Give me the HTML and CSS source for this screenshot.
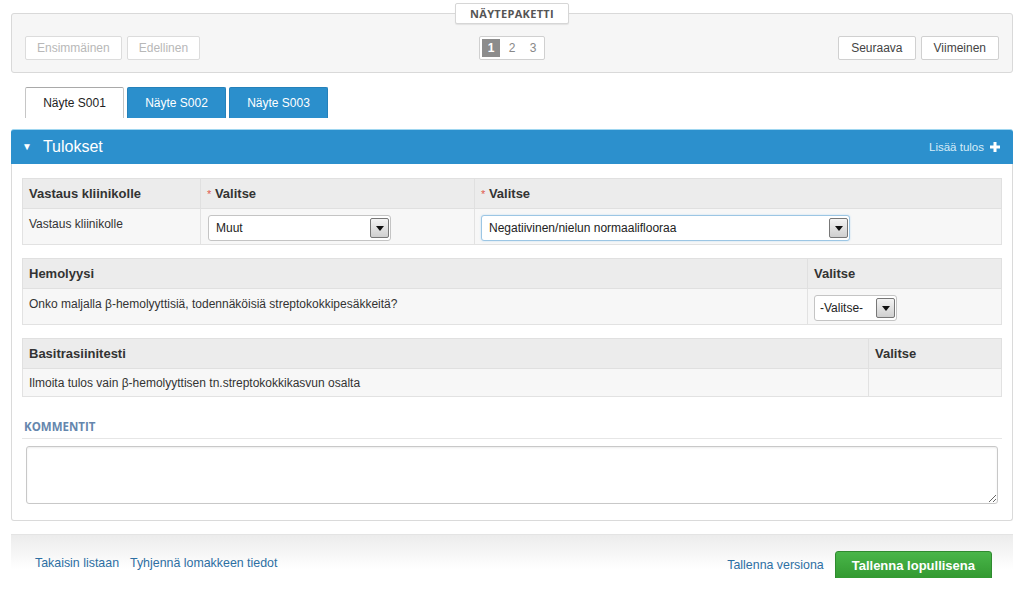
FILE: index.html
```html
<!DOCTYPE html>
<html lang="fi">
<head>
<meta charset="utf-8">
<title>Näytepaketti</title>
<link rel="stylesheet" href="styles.css">
</head>
<body>
<div class="page">
  <fieldset class="pager">
    <legend class="pager-legend">NÄYTEPAKETTI</legend>
    <div class="pager-row">
      <div class="btn-group">
        <span class="btn btn-disabled">Ensimmäinen</span>
        <span class="btn btn-disabled">Edellinen</span>
      </div>
      <div class="pages">
        <span class="page-num page-active">1</span>
        <span class="page-num">2</span>
        <span class="page-num">3</span>
      </div>
      <div class="btn-group btn-group-right">
        <span class="btn">Seuraava</span>
        <span class="btn">Viimeinen</span>
      </div>
    </div>
  </fieldset>

  <div class="tabs">
    <span class="tab tab-active">Näyte S001</span>
    <span class="tab">Näyte S002</span>
    <span class="tab">Näyte S003</span>
  </div>

  <div class="panel">
    <div class="panel-head">
      <span class="panel-title"><span class="caret">&#9660;</span>Tulokset</span>
      <span class="add-link">Lisää tulos <svg class="plus" width="10" height="10" viewBox="0 0 10 10"><path d="M3.5 0h3v3.5H10v3H6.5V10h-3V6.5H0v-3h3.5z" fill="#fff"/></svg></span>
    </div>
    <div class="panel-body">
      <table class="grid grid-1">
        <colgroup><col class="c1a"><col class="c1b"><col></colgroup>
        <tr class="head">
          <th>Vastaus kliinikolle</th>
          <th><span class="req">*</span> Valitse</th>
          <th><span class="req">*</span> Valitse</th>
        </tr>
        <tr class="row row-tall">
          <td class="top">Vastaus kliinikolle</td>
          <td><div class="select sel-muut"><span class="sel-text">Muut</span><span class="sel-arrow"></span></div></td>
          <td><div class="select sel-neg sel-focus"><span class="sel-text">Negatiivinen/nielun normaaliflooraa</span><span class="sel-arrow"></span></div></td>
        </tr>
      </table>

      <table class="grid grid-2">
        <colgroup><col><col class="c2b"></colgroup>
        <tr class="head">
          <th>Hemolyysi</th>
          <th>Valitse</th>
        </tr>
        <tr class="row row-tall">
          <td class="top">Onko maljalla β-hemolyyttisiä, todennäköisiä streptokokkipesäkkeitä?</td>
          <td><div class="select sel-small"><span class="sel-text">-Valitse-</span><span class="sel-arrow"></span></div></td>
        </tr>
      </table>

      <table class="grid grid-3">
        <colgroup><col><col class="c3b"></colgroup>
        <tr class="head">
          <th>Basitrasiinitesti</th>
          <th>Valitse</th>
        </tr>
        <tr class="row">
          <td>Ilmoita tulos vain β-hemolyyttisen tn.streptokokkikasvun osalta</td>
          <td></td>
        </tr>
      </table>

      <div class="comments-label">KOMMENTIT</div>
      <textarea class="comments"></textarea>
    </div>
  </div>

  <div class="footer">
    <div class="footer-left">
      <span class="link">Takaisin listaan</span>
      <span class="link">Tyhjennä lomakkeen tiedot</span>
    </div>
    <div class="footer-right">
      <span class="link">Tallenna versiona</span>
      <span class="btn-save">Tallenna lopullisena</span>
    </div>
  </div>
</div>
</body>
</html>
```

FILE: styles.css
```css
* { box-sizing: border-box; }

html, body {
  margin: 0;
  padding: 0;
  background: #fff;
}

body {
  font-family: "Liberation Sans", Arial, sans-serif;
  font-size: 12px;
  color: #333;
}

.page {
  width: 1002px;
  margin-left: 11px;
}

/* ---------- pager ---------- */
.pager {
  margin: 3px 0 0 0;
  padding: 12px 13px 12px 13px;
  border: 1px solid #d9d9d9;
  border-radius: 3px;
  background: #f6f6f6;
  min-width: 0;
}

.pager-legend {
  margin: 0 auto;
  padding: 0 14px;
  height: 21px;
  line-height: 19px;
  border: 1px solid #d6d6d6;
  border-radius: 2px;
  background: #fff;
  box-shadow: 0 1px 1px rgba(0,0,0,0.08);
  font-family: "Open Sans", "Liberation Sans", sans-serif;
  font-weight: 700;
  font-size: 11px;
  color: #555;
  letter-spacing: 0.3px;
}

.pager-row {
  display: grid;
  grid-template-columns: 1fr auto 1fr;
  align-items: center;
}

.btn-group {
  display: flex;
  gap: 5px;
}

.btn-group-right {
  justify-content: flex-end;
}

.btn {
  display: inline-block;
  height: 24px;
  line-height: 22px;
  padding: 0 12px;
  border: 1px solid #d0d0d0;
  border-radius: 2px;
  background: #fff;
  color: #444;
  font-size: 12px;
}

.btn-disabled {
  color: #b8b8b8;
  border-color: #dcdcdc;
  padding: 0 11px;
}

.pages {
  display: flex;
  height: 24px;
  padding: 2px;
  border: 1px solid #d0d0d0;
  border-radius: 2px;
  background: #fff;
  gap: 3px;
}

.page-num {
  width: 18px;
  line-height: 18px;
  text-align: center;
  color: #888;
  font-size: 12px;
}

.page-active {
  background: #8c8c8c;
  color: #fff;
  font-weight: 700;
}

/* ---------- tabs ---------- */
.tabs {
  display: flex;
  gap: 3px;
  margin: 14px 0 0 14px;
  height: 31px;
}

.tab {
  width: 99px;
  height: 31px;
  line-height: 30px;
  text-align: center;
  background: #2b8fcc;
  color: #fff;
  font-size: 12px;
  border: 1px solid #2581ba;
  border-bottom: none;
  border-radius: 2px 2px 0 0;
}

.tab-active {
  background: #fff;
  color: #222;
  border: 1px solid #c6c6c6;
  border-top: 1px solid #a9a9a9;
  border-bottom: none;
}

/* ---------- panel ---------- */
.panel {
  margin-top: 11px;
}

.panel-head {
  display: flex;
  justify-content: space-between;
  align-items: center;
  height: 35px;
  padding: 0 13px 0 11px;
  background: #2c90cd;
  border-top: 1px solid #9fd6f0;
  border-radius: 3px 3px 0 0;
  color: #fff;
}

.panel-title {
  font-size: 16px;
}

.caret {
  font-size: 10px;
  margin-right: 11px;
  position: relative;
  top: -2px;
}

.add-link {
  font-size: 11.5px;
  color: #d6ecf8;
  display: flex;
  align-items: center;
  gap: 6px;
}

.plus { display: block; }

.panel-body {
  border: 1px solid #dadada;
  border-top: none;
  border-radius: 0 0 3px 3px;
  padding: 14px 10px 16px 10px;
  background: #fff;
}

/* ---------- tables ---------- */
.grid {
  width: 980px;
  border-collapse: collapse;
  table-layout: fixed;
  margin-bottom: 13px;
}

.grid th, .grid td {
  text-align: left;
  padding: 0 6px;
  border: 1px solid #e2e2e2;
}

.grid .head th {
  height: 30px;
  background: #ececec;
  font-size: 13px;
  font-weight: 700;
  color: #333;
  border-color: #e0e0e0;
}

.grid .row td {
  height: 28px;
  background: #f7f7f7;
  font-size: 12px;
  color: #333;
}

.grid .row-tall td {
  height: 36px;
}

.grid td.top {
  vertical-align: top;
  padding-top: 8px;
}

.c1a { width: 178px; }
.c1b { width: 274px; }
.c2b { width: 194px; }
.c3b { width: 133px; }

.req {
  color: #e05a4f;
  font-size: 11px;
  font-weight: 400;
}

/* ---------- selects ---------- */
.select {
  display: flex;
  align-items: center;
  justify-content: space-between;
  height: 26px;
  padding: 0 1px 0 7px;
  margin-top: 3px;
  border: 1px solid #c4c4c4;
  border-radius: 3px;
  background: #fff;
  font-size: 12px;
  color: #222;
}

.sel-focus {
  border-color: #9cc6e4;
  box-shadow: 0 0 2px rgba(82,168,236,0.35);
}

.sel-muut { width: 183px; margin-left: 1px; }
.sel-neg { width: 369px; }
.sel-small { width: 83px; padding-left: 5px; }

.sel-arrow {
  width: 19px;
  height: 20px;
  border: 1px solid #777;
  border-radius: 2px;
  background: linear-gradient(#f4f4f4, #cfcfcf);
  position: relative;
}

.sel-arrow::after {
  content: "";
  position: absolute;
  left: 5px;
  top: 7px;
  border-left: 4px solid transparent;
  border-right: 4px solid transparent;
  border-top: 5px solid #111;
}

/* ---------- comments ---------- */
.comments-label {
  margin-top: 22px;
  padding: 0 2px 4px 2px;
  border-bottom: 1px solid #e6e6e6;
  font-family: "Open Sans", "Liberation Sans", sans-serif;
  font-weight: 700;
  font-size: 11.5px;
  color: #6586ad;
}

.comments {
  display: block;
  width: 972px;
  height: 58px;
  margin: 7px 0 0 4px;
  border: 1px solid #c8c8c8;
  border-radius: 3px;
  box-shadow: inset 0 1px 2px rgba(0,0,0,0.08);
  resize: vertical;
  font-family: inherit;
}

/* ---------- footer ---------- */
.footer {
  display: flex;
  justify-content: space-between;
  align-items: flex-end;
  margin-top: 13px;
  height: 44px;
  padding: 0 21px 0 24px;
  background: linear-gradient(#ececec, #fff 80%);
  border-top: 1px solid #e4e4e4;
}

.footer-left {
  display: flex;
  gap: 11px;
  padding-bottom: 8px;
}

.footer-right {
  display: flex;
  align-items: center;
  gap: 11px;
}

.link {
  color: #2d6fa3;
  font-size: 12.4px;
}

.btn-save {
  display: inline-block;
  height: 30px;
  line-height: 28px;
  padding: 0 16px;
  border: 1px solid #2f8a2f;
  border-radius: 3px;
  background: linear-gradient(#49b649, #31972f);
  color: #fff;
  font-weight: 700;
  font-size: 13px;
  margin-bottom: -3px;
}
```
